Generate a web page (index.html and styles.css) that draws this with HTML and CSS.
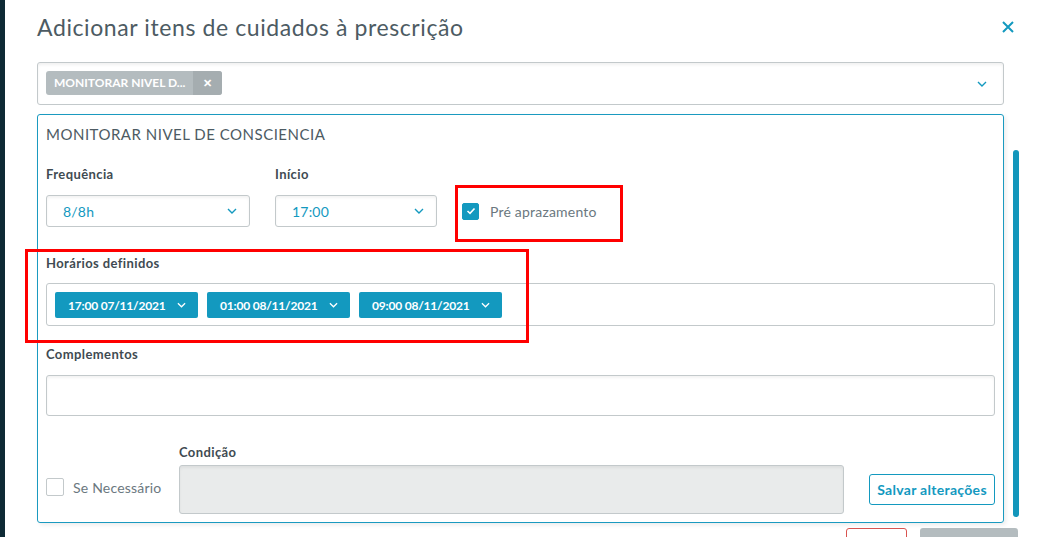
FILE: index.html
```html
<!DOCTYPE html>
<html lang="pt-BR">
<head>
  <meta charset="UTF-8">
  <title>Adicionar itens de cuidados à prescrição</title>
  <link rel="stylesheet" href="styles.css">
</head>
<body>
  <div class="side-strip"></div>
  <div class="modal">
    <div class="modal-header">
      <h1 class="modal-title">Adicionar itens de cuidados à prescrição</h1>
      <svg class="close-icon" viewBox="0 0 12 12"><path d="M1 1 L11 11 M11 1 L1 11" stroke="#1399bf" stroke-width="2" fill="none"/></svg>
    </div>

    <div class="multi-select">
      <div class="tag">
        <span class="tag-text">MONITORAR NIVEL D...</span>
        <span class="tag-close">✕</span>
      </div>
      <svg class="chevron" viewBox="0 0 10 6"><path d="M1 1 L5 5 L9 1" stroke="#1399bf" stroke-width="1.4" fill="none"/></svg>
    </div>

    <div class="card">
      <div class="card-title">MONITORAR NIVEL DE CONSCIENCIA</div>

      <div class="row-top">
        <div class="field field-freq">
          <label class="label">Frequência</label>
          <div class="select">
            <span>8/8h</span>
            <svg class="chevron" viewBox="0 0 10 6"><path d="M1 1 L5 5 L9 1" stroke="#1399bf" stroke-width="1.4" fill="none"/></svg>
          </div>
        </div>
        <div class="field field-inicio">
          <label class="label">Início</label>
          <div class="select">
            <span>17:00</span>
            <svg class="chevron" viewBox="0 0 10 6"><path d="M1 1 L5 5 L9 1" stroke="#1399bf" stroke-width="1.4" fill="none"/></svg>
          </div>
        </div>
        <div class="check-line">
          <span class="checkbox checked">
            <svg viewBox="0 0 10 8"><path d="M1.5 4 L4 6.3 L8.5 1.5" stroke="#fff" stroke-width="1.6" fill="none"/></svg>
          </span>
          <span class="check-text">Pré aprazamento</span>
        </div>
      </div>

      <label class="label label-horarios">Horários definidos</label>
      <div class="times-box">
        <div class="time-chip">17:00 07/11/2021 <svg class="chevron" viewBox="0 0 10 6"><path d="M1 1 L5 5 L9 1" stroke="#fff" stroke-width="1.4" fill="none"/></svg></div>
        <div class="time-chip">01:00 08/11/2021 <svg class="chevron" viewBox="0 0 10 6"><path d="M1 1 L5 5 L9 1" stroke="#fff" stroke-width="1.4" fill="none"/></svg></div>
        <div class="time-chip">09:00 08/11/2021 <svg class="chevron" viewBox="0 0 10 6"><path d="M1 1 L5 5 L9 1" stroke="#fff" stroke-width="1.4" fill="none"/></svg></div>
      </div>

      <label class="label label-compl">Complementos</label>
      <div class="text-input"></div>

      <div class="row-bottom">
        <div class="check-line check-se">
          <span class="checkbox"></span>
          <span class="check-text">Se Necessário</span>
        </div>
        <div class="field field-cond">
          <label class="label label-cond">Condição</label>
          <div class="text-input disabled"></div>
        </div>
        <button class="btn-outline">Salvar alterações</button>
      </div>
    </div>

    <div class="footer">
      <button class="btn-danger"></button>
      <button class="btn-gray"></button>
    </div>

    <!-- annotations drawn over the screenshot -->
    <div class="mark mark-check"></div>
    <div class="mark mark-times"></div>
    <div class="scrollbar"></div>
  </div>
</body>
</html>
```

FILE: styles.css
```css
body {
  margin: 0;
  display: flex;
  height: 537px;
  overflow: hidden;
  font-family: Lato, "Open Sans", Arial, sans-serif;
  background: #fff;
}
.side-strip {
  width: 5px;
  background: #0e2a35;
  flex: none;
}
.modal {
  flex: 1;
  position: relative;
  padding: 12px 40px 0 32px;
}
.modal-header {
  display: flex;
  justify-content: space-between;
  align-items: center;
  margin-right: -10px;
  height: 30px;
}
.modal-title {
  margin: 0;
  font-size: 23px;
  font-weight: 400;
  color: #4d5b63;
  letter-spacing: 0.6px;
}
.close-icon {
  width: 12px;
  height: 12px;
}
.multi-select {
  margin-top: 20px;
  border: 1px solid #c3c9cb;
  border-radius: 3px;
  box-shadow: inset 0 2px 3px rgba(0,0,0,0.06);
  display: flex;
  align-items: flex-start;
  justify-content: space-between;
  padding: 8px 16px 0 8px;
  height: 33px;
}
.tag {
  display: flex;
  height: 24px;
  border-radius: 3px;
  overflow: hidden;
  background: #b4bcbf;
  color: #fff;
  font-size: 12px;
  font-weight: 700;
}
.tag-text {
  padding: 0 8px;
  width: 131px;
  line-height: 24px;
  white-space: nowrap;
}
.tag-close {
  width: 29px;
  background: #a5adb0;
  text-align: center;
  line-height: 24px;
  font-size: 11px;
}
.chevron {
  width: 10px;
  height: 6px;
}
.multi-select .chevron {
  margin-top: 10px;
}
.card {
  margin-top: 9px;
  border: 1px solid #1a9ac0;
  border-radius: 3px;
  padding: 9px 8px 8px 8px;
  box-shadow: 2px 2px 4px rgba(0,0,0,0.08);
}
.card-title {
  font-size: 15px;
  line-height: 20px;
  color: #4d5b63;
  letter-spacing: 0.5px;
}
.label {
  display: block;
  font-size: 13px;
  line-height: 18px;
  font-weight: 700;
  color: #3f4b52;
  letter-spacing: 0.4px;
}
.row-top {
  display: flex;
  align-items: flex-end;
  margin-top: 21px;
}
.field .label {
  margin-bottom: 12px;
}
.field-freq {
  width: 204px;
}
.field-inicio {
  width: 162px;
  margin-left: 25px;
}
.select {
  height: 30px;
  border: 1px solid #c3c9cb;
  border-radius: 3px;
  box-shadow: inset 0 2px 3px rgba(0,0,0,0.05);
  display: flex;
  align-items: center;
  justify-content: space-between;
  padding: 0 12px 0 16px;
  color: #1399bf;
  font-size: 14px;
  letter-spacing: 0.2px;
}
.check-line {
  display: flex;
  align-items: center;
  color: #6b7880;
  font-size: 14px;
  letter-spacing: 0.2px;
}
.row-top .check-line {
  margin-left: 25px;
  height: 32px;
}
.checkbox {
  width: 15px;
  height: 15px;
  border: 1px solid #c3c9cb;
  border-radius: 2px;
  background: #fff;
  display: flex;
  align-items: center;
  justify-content: center;
  margin-right: 11px;
}
.checkbox.checked {
  background: #1399bf;
  border-color: #1399bf;
}
.checkbox svg {
  width: 10px;
  height: 8px;
}
.label-horarios {
  margin-top: 27px;
}
.times-box {
  margin-top: 11px;
  border: 1px solid #c3c9cb;
  border-radius: 3px;
  padding: 8px 8px 7px 8px;
  display: flex;
  gap: 9px;
}
.time-chip {
  width: 143px;
  height: 26px;
  box-sizing: border-box;
  background: #1399bf;
  border-radius: 2px;
  color: #fff;
  font-size: 12px;
  font-weight: 700;
  letter-spacing: -0.2px;
  display: flex;
  align-items: center;
  padding: 0 12px 0 13px;
  justify-content: space-between;
}
.time-chip .chevron {
  width: 9px;
}
.label-compl {
  margin-top: 19px;
}
.text-input {
  margin-top: 12px;
  height: 39px;
  border: 1px solid #c3c9cb;
  border-radius: 3px;
  box-shadow: inset 0 2px 3px rgba(0,0,0,0.05);
}
.row-bottom {
  display: flex;
  align-items: flex-end;
  margin-top: 27px;
}
.check-se {
  width: 133px;
  flex: none;
  margin-bottom: 18px;
}
.check-se .checkbox {
  width: 16px;
  height: 16px;
  margin-right: 9px;
}
.field-cond {
  flex: 1;
}
.field-cond .label-cond {
  margin-bottom: 4px;
}
.text-input.disabled {
  margin-top: 0;
  height: 47px;
  background: #e9ebeb;
}
.btn-outline {
  margin-left: 25px;
  margin-bottom: 9px;
  width: 126px;
  height: 31px;
  border: 1px solid #1399bf;
  border-radius: 3px;
  background: #fff;
  color: #1399bf;
  font-family: inherit;
  font-size: 14px;
  font-weight: 700;
  letter-spacing: 0.3px;
  padding: 0;
}
.footer {
  display: flex;
  justify-content: flex-end;
  gap: 13px;
  margin-top: 5px;
  margin-right: -14px;
}
.btn-danger {
  width: 61px;
  height: 30px;
  border: 1px solid #d9534f;
  border-radius: 3px;
  background: #fff;
}
.btn-gray {
  width: 98px;
  height: 30px;
  border: none;
  border-radius: 3px;
  background: #b4bcbf;
}
.mark {
  position: absolute;
  border: 3px solid #ff0000;
}
.mark-check {
  left: 450px;
  top: 185px;
  width: 162px;
  height: 51px;
}
.mark-times {
  left: 20px;
  top: 249px;
  width: 498px;
  height: 88px;
}
.scrollbar {
  position: absolute;
  left: 1008px;
  top: 150px;
  width: 6px;
  height: 367px;
  border-radius: 3px;
  background: #1396bb;
}
```
